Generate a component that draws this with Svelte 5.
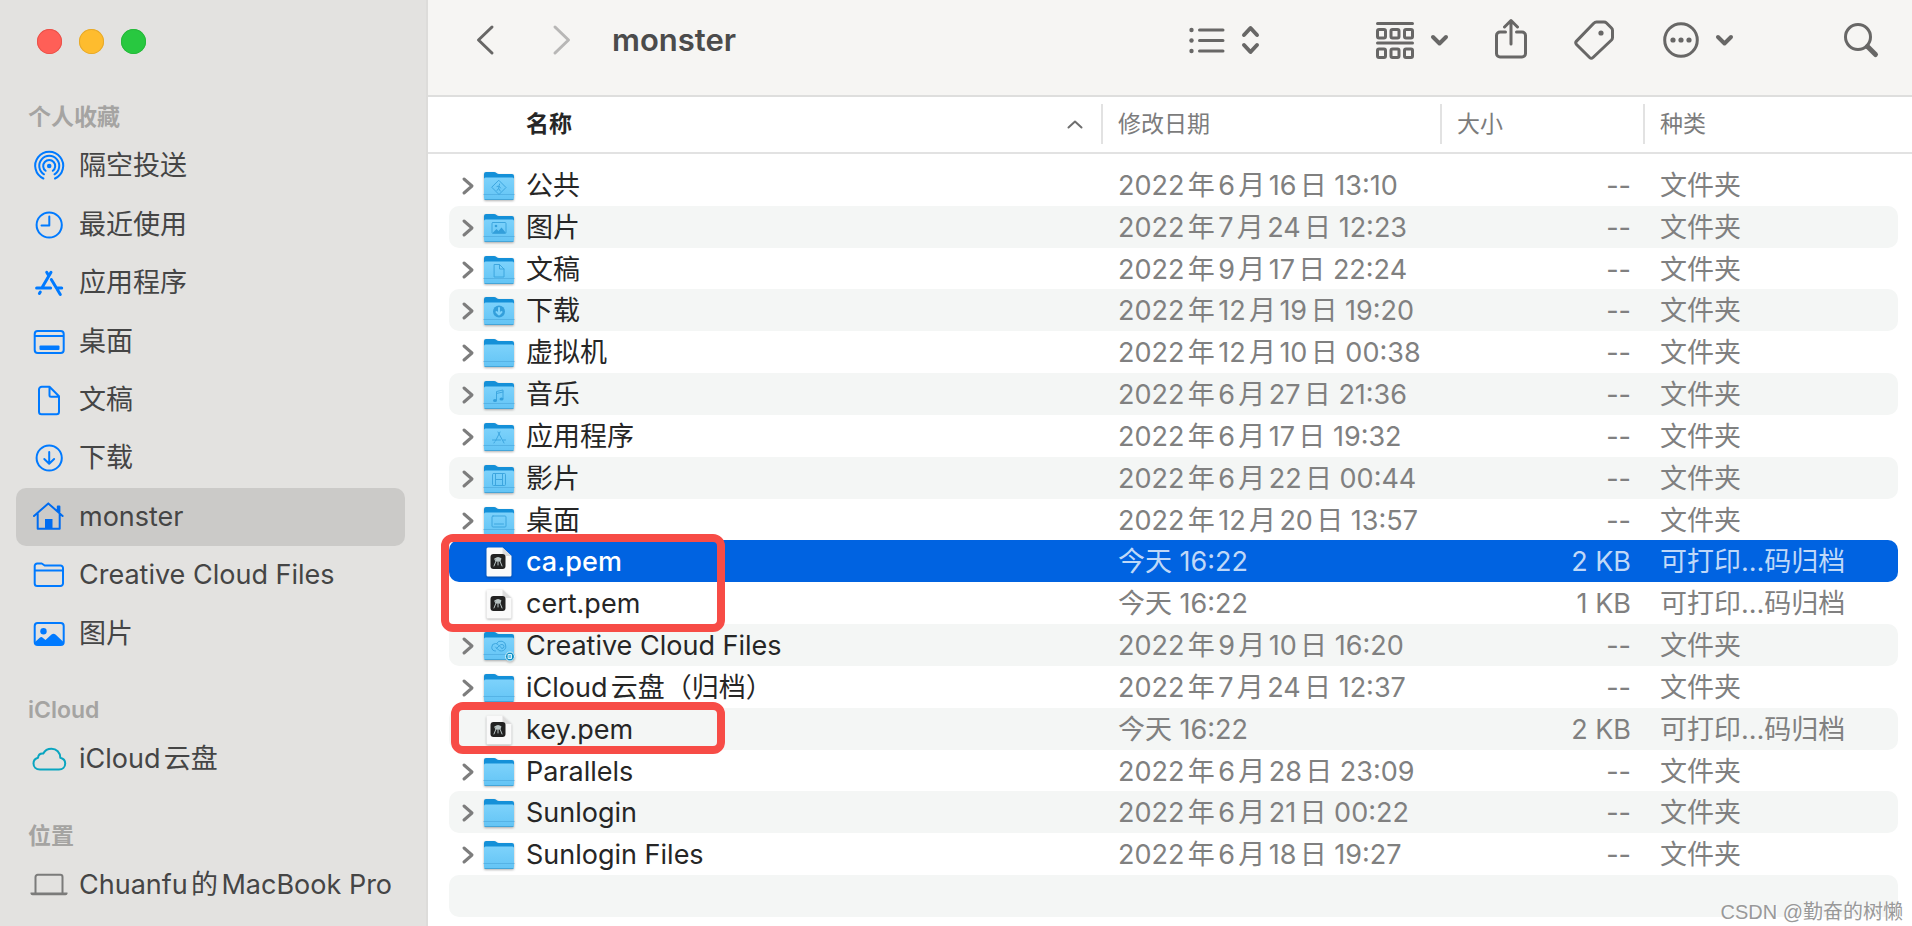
<script lang="ts">
  interface SidebarItem {
    icon: string;
    label: string;
  }

  interface SidebarSection {
    title: string;
    items: SidebarItem[];
  }

  interface FileRow {
    name: string;
    date: string;
    kind: 'folder' | 'pem';
    glyph?: string;
    size?: string;
    mark?: 'pair' | 'single';
  }

  const sections: SidebarSection[] = [
    {
      title: '个人收藏',
      items: [
        { icon: 'airdrop', label: '隔空投送' },
        { icon: 'clock', label: '最近使用' },
        { icon: 'apps', label: '应用程序' },
        { icon: 'desktop', label: '桌面' },
        { icon: 'doc', label: '文稿' },
        { icon: 'download', label: '下载' },
        { icon: 'home', label: 'monster' },
        { icon: 'folder', label: 'Creative Cloud Files' },
        { icon: 'picture', label: '图片' },
      ],
    },
    { title: 'iCloud', items: [{ icon: 'cloud', label: 'iCloud云盘' }] },
    { title: '位置', items: [{ icon: 'laptop', label: 'Chuanfu的MacBook Pro' }] },
  ];

  const files: FileRow[] = [
    { name: '公共', date: '2022年6月16日 13:10', kind: 'folder', glyph: 'public' },
    { name: '图片', date: '2022年7月24日 12:23', kind: 'folder', glyph: 'picture' },
    { name: '文稿', date: '2022年9月17日 22:24', kind: 'folder', glyph: 'doc' },
    { name: '下载', date: '2022年12月19日 19:20', kind: 'folder', glyph: 'download' },
    { name: '虚拟机', date: '2022年12月10日 00:38', kind: 'folder' },
    { name: '音乐', date: '2022年6月27日 21:36', kind: 'folder', glyph: 'music' },
    { name: '应用程序', date: '2022年6月17日 19:32', kind: 'folder', glyph: 'apps' },
    { name: '影片', date: '2022年6月22日 00:44', kind: 'folder', glyph: 'movie' },
    { name: '桌面', date: '2022年12月20日 13:57', kind: 'folder', glyph: 'desktop' },
    { name: 'ca.pem', date: '今天 16:22', kind: 'pem', size: '2 KB', mark: 'pair' },
    { name: 'cert.pem', date: '今天 16:22', kind: 'pem', size: '1 KB' },
    { name: 'Creative Cloud Files', date: '2022年9月10日 16:20', kind: 'folder', glyph: 'cc' },
    { name: 'iCloud云盘（归档）', date: '2022年7月24日 12:37', kind: 'folder' },
    { name: 'key.pem', date: '今天 16:22', kind: 'pem', size: '2 KB', mark: 'single' },
    { name: 'Parallels', date: '2022年6月28日 23:09', kind: 'folder' },
    { name: 'Sunlogin', date: '2022年6月21日 00:22', kind: 'folder' },
    { name: 'Sunlogin Files', date: '2022年6月18日 19:27', kind: 'folder' },
  ];

  let place = $state('monster');
  let selected = $state('ca.pem');
</script>

{#snippet sidebarIcon(icon: string)}
  <svg class="side-icon {icon}" viewBox="0 0 34 34" aria-hidden="true">
    {#if icon === 'airdrop'}
      <path d="M11.4 29.5A14 14 0 1 1 23 29.5M12 25.3A10 10 0 1 1 22.5 25.3M13.6 21.8A6 6 0 1 1 20.8 21.8" />
      <circle class="solid" cx="17.2" cy="17" r="2.3" />
    {:else if icon === 'clock'}
      <circle cx="17.2" cy="17" r="12.6" />
      <path d="M17.3 8.5v9H9.5" />
    {:else if icon === 'apps'}
      <path
        class="thick"
        d="M19 6.3L10.4 21M14.7 6.3l1.8 3M19.3 13.5l9 15M4.6 22h14M24.5 22h5.2M7.4 27.5l.9-1.5"
      />
    {:else if icon === 'desktop'}
      <rect x="2.7" y="6" width="29" height="22" rx="3" />
      <path d="M3 11h28" />
      <rect class="solid" x="7.5" y="20.5" width="20" height="4.5" rx="1" />
    {:else if icon === 'doc'}
      <path d="M10 3.7h7.5l9.5 9.5v15.5a2.5 2.5 0 0 1-2.5 2.5h-15A2.5 2.5 0 0 1 7 28.7V6.5a2.8 2.8 0 0 1 3-2.8zM17.5 4v8.2a1.5 1.5 0 0 0 1.5 1.5h8" />
    {:else if icon === 'download'}
      <circle cx="17.2" cy="17" r="12.6" />
      <path d="M17.2 11v11.5M12.3 18l4.9 4.7 4.9-4.7" />
    {:else if icon === 'home'}
      <path d="M2 16L16.3 3.4 30.6 16M5.7 13.5v15.2h22V13.5M25.8 10.5v-4h1.6V12" />
      <path class="solid" d="M13 19h7.5v10H13z" />
    {:else if icon === 'folder'}
      <path d="M2.7 25.5V8a2.5 2.5 0 0 1 2.5-2.5h4.5l3 2h15.8A2.500 2.500 0 0 1 31 10v15.500a2.500 2.500 0 0 1-2.500 2.500H5.200a2.500 2.500 0 0 1-2.500-2.500zM3 12.500h28" />
    {:else if icon === 'picture'}
      <rect x="2.7" y="6" width="29" height="22" rx="3" />
      <circle class="solid" cx="11.5" cy="14.3" r="3.2" />
      <path class="solid" d="M3 25l5-4.5q1.500-1 3 .5l2.500 2 6-5.500q2-1.500 4 0l8 7.500v1.500q0 1.500-2 1.500H5q-2 0-2-1.500z" />
    {:else if icon === 'cloud'}
      <path d="M8 27.5c-4 0-6.500-2.700-6.500-6 0-2.700 1.700-5 4.500-5.700.3-3 2.300-4.600 5.300-4.300 1.700-3.500 4.700-4.800 8.200-4.800 5 0 8.700 3.800 8.800 9 3.200.7 4.900 3 4.900 5.700 0 3.500-2.600 6.100-6.200 6.100z" />
    {:else if icon === 'laptop'}
      <path d="M3.5 25V9a2.200 2.200 0 0 1 2.200-2.200h22.600A2.200 2.200 0 0 1 30.500 9v16" />
      <path class="solid" d="M-1.500 24.500h37v.8a2 2 0 0 1-2 2h-33a2 2 0 0 1-2-2z" />
    {/if}
  </svg>
{/snippet}

{#snippet folderIcon(glyph?: string)}
  <svg class="file-icon" viewBox="0 0 30 30" aria-hidden="true">
    <path class="back" d="M0 3a2 2 0 0 1 2-2h8q1.500 0 2.500 1t2.500 1h13a2 2 0 0 1 2 2v6H0z" />
    <path fill="url(#folder-front)" d="M0 8q0-1.500 1.500-1.500h27Q30 6.500 30 8v19a2 2 0 0 1-2 2H2a2 2 0 0 1-2-2z" />
    <path class="crease" d="M0 23.500h30" />
    <path class="edge" d="M1 28.500h28" />
    <g class="glyph">
      {#if glyph === 'public'}
        <path d="M15 9.500l7 7-7 7-7-7z" />
        <path d="M15.500 13v1M13 15.500l2-.5 1.500 2M15 15l-.3 2.500 1.500 2.500M14.500 17.500l-1.500 2" />
      {:else if glyph === 'picture'}
        <rect x="8" y="9.500" width="14" height="11" rx="1" />
        <path class="fill" d="M8.500 20l4-4 2 2 3-3.500 4.500 5.500z" />
        <circle class="fill" cx="12" cy="13" r="1.300" />
      {:else if glyph === 'doc'}
        <path d="M10.500 9.500h5l4.500 4.500v8h-9.500zM15.500 9.500V14H20" />
      {:else if glyph === 'download'}
        <circle class="fill" cx="15" cy="15.500" r="6" />
        <path class="light" d="M15 12v6.500M12.500 16l2.500 2.500 2.500-2.500" />
      {:else if glyph === 'music'}
        <path d="M12.500 20v-8.500l6.500-1.500v8.500M12.500 13.500l6.500-1.500" />
        <ellipse class="fill" cx="11" cy="20.500" rx="2" ry="1.500" />
        <ellipse class="fill" cx="17.500" cy="19" rx="2" ry="1.500" />
      {:else if glyph === 'apps'}
        <path d="M16 10l-4.500 9M14 10l6 11M8.500 18h8M19.500 18h2M10 21l.5-1" />
      {:else if glyph === 'movie'}
        <rect x="8.500" y="9.500" width="13" height="12" rx="1" />
        <path d="M11.500 9.500v12M18.500 9.500v12M11.500 15.500h7" />
      {:else if glyph === 'desktop'}
        <rect x="8" y="10" width="14" height="11" rx="1" />
        <path d="M10.500 18h9" />
      {:else if glyph === 'cc'}
        <path d="M11.500 20a3.700 3.700 0 0 1 0-7.500q1.500 0 2.500 1l4 4M12.500 12.500a5 5 0 0 1 9.300 2.500 4.500 4.500 0 0 1-4.300 5q-2 0-3-1l-3-3M18 17.500a2 2 0 0 0 0-4q-1.500 0-2.500 1l-3 3" />
        <circle class="badge" cx="26" cy="25.500" r="4.500" />
        <path class="badge-bar" d="M24.500 23.500h3v4h-3z" />
      {/if}
    </g>
  </svg>
{/snippet}

{#snippet pemIcon()}
  <svg class="file-icon" viewBox="0 0 30 30" aria-hidden="true">
    <path class="page" d="M4 .5h14.500L27.500 9v19a1.500 1.500 0 0 1-1.500 1.500H4A1.500 1.500 0 0 1 2.500 28V2A1.500 1.500 0 0 1 4 .5z" />
    <path class="fold" d="M18.500.5v7A1.500 1.500 0 0 0 20 9h7.500z" />
    <rect class="tile" x="6.500" y="7" width="15" height="15" rx="3" />
    <path class="keys" d="M11 11.500q3-2 6 0l-1 2.500h-4zM12 14l-2 5M14 14v4M16 14l2 5" />
  </svg>
{/snippet}

{#snippet chevronDown()}
  <svg class="tool-icon" width="17" height="11" viewBox="0 0 17 11" aria-hidden="true">
    <path class="bold" d="M2 2l6.500 6.500L15 2" />
  </svg>
{/snippet}

<svg class="defs" width="0" height="0" aria-hidden="true">
  <defs>
    <linearGradient id="folder-front" x1="0" y1="0" x2="0" y2="1">
      <stop offset="0" stop-color="#7dd2fb" />
      <stop offset="1" stop-color="#63c4f5" />
    </linearGradient>
  </defs>
</svg>

<div class="window">
  <aside class="sidebar">
    <div class="lights">
      <button class="light-btn close" aria-label="关闭"></button>
      <button class="light-btn minimize" aria-label="最小化"></button>
      <button class="light-btn zoom" aria-label="缩放"></button>
    </div>
    <nav class="places">
      {#each sections as section}
        <h2>{section.title}</h2>
        {#each section.items as item}
          <a href="#{item.icon}" class:active={item.label === place} onclick={() => (place = item.label)}>
            {@render sidebarIcon(item.icon)}
            <span>{item.label}</span>
          </a>
        {/each}
      {/each}
    </nav>
  </aside>

  <main class="content">
    <header class="toolbar">
      <div class="history">
        <button aria-label="后退">
          <svg class="tool-icon" width="18" height="30" viewBox="0 0 18 30" aria-hidden="true">
            <path d="M16 2L2.500 15 16 28" />
          </svg>
        </button>
        <button aria-label="前进" disabled>
          <svg class="tool-icon" width="18" height="30" viewBox="0 0 18 30" aria-hidden="true">
            <path d="M2 2l13.500 13L2 28" />
          </svg>
        </button>
      </div>
      <h1>monster</h1>
      <div class="tools">
        <button class="view" aria-label="显示方式">
          <svg class="tool-icon" width="36" height="28" viewBox="0 0 36 28" aria-hidden="true">
            <path d="M10.500 4H34M10.500 14.500H34M10.500 25H34" />
            <circle class="dot" cx="2.500" cy="4" r="2.200" />
            <circle class="dot" cx="2.500" cy="14.500" r="2.200" />
            <circle class="dot" cx="2.500" cy="25" r="2.200" />
          </svg>
          <svg class="tool-icon" width="17" height="28" viewBox="0 0 17 28" aria-hidden="true">
            <path class="bold" d="M2 9l6.500-7L15 9M2 19l6.500 7 6.500-7" />
          </svg>
        </button>
        <button class="group" aria-label="分组">
          <svg class="tool-icon" width="38" height="38" viewBox="0 0 38 38" aria-hidden="true">
            <path d="M1.500 2.500h35M1.500 22h35" />
            <rect x="1.500" y="8.500" width="8" height="8.500" rx="1.500" />
            <rect x="15" y="8.500" width="8" height="8.500" rx="1.500" />
            <rect x="28.500" y="8.500" width="8" height="8.500" rx="1.500" />
            <rect x="1.500" y="28" width="8" height="8.500" rx="1.500" />
            <rect x="15" y="28" width="8" height="8.500" rx="1.500" />
            <rect x="28.500" y="28" width="8" height="8.500" rx="1.500" />
          </svg>
          {@render chevronDown()}
        </button>
        <button aria-label="共享">
          <svg class="tool-icon" width="32" height="42" viewBox="0 0 32 42" aria-hidden="true">
            <path d="M10.500 13H5a3.500 3.500 0 0 0-3.500 3.500v18A3.500 3.500 0 0 0 5 38h22a3.500 3.500 0 0 0 3.500-3.500v-18A3.500 3.500 0 0 0 27 13h-5.500M16 25V2M9.500 8L16 1.500 22.500 8" />
          </svg>
        </button>
        <button aria-label="标签">
          <svg class="tool-icon" width="40" height="40" viewBox="0 0 40 40" aria-hidden="true">
            <path d="M19.500 3.500Q21 2 22.500 2H30q1.500 0 2.500 1l5 5q1 1 1 2.500v7q0 1.500-1 2.500L19 37.500q-1.700 1.500-3.400 0L2.500 24.500q-1.500-1.700 0-3.400z" />
            <circle class="dot" cx="27" cy="13" r="2.600" />
          </svg>
        </button>
        <button class="more" aria-label="更多">
          <svg class="tool-icon" width="36" height="36" viewBox="0 0 36 36" aria-hidden="true">
            <circle cx="18" cy="18" r="16.300" />
            <circle class="dot" cx="10" cy="18" r="2.600" />
            <circle class="dot" cx="18" cy="18" r="2.600" />
            <circle class="dot" cx="26" cy="18" r="2.600" />
          </svg>
          {@render chevronDown()}
        </button>
        <button class="search" aria-label="搜索">
          <svg class="tool-icon" width="34" height="36" viewBox="0 0 34 36" aria-hidden="true">
            <circle cx="14" cy="15" r="12.500" />
            <path class="handle" d="M23.500 24.500l8 8" />
          </svg>
        </button>
      </div>
    </header>

    <table>
      <thead>
        <tr>
          <th class="sorted" scope="col" aria-sort="ascending">
            <span>名称</span>
            <svg width="16" height="9" viewBox="0 0 16 9" aria-hidden="true">
              <path d="M1.500 7.500L8 1.500l6.500 6" />
            </svg>
          </th>
          <th scope="col">修改日期</th>
          <th scope="col">大小</th>
          <th scope="col">种类</th>
        </tr>
      </thead>
      <tbody>
        {#each files as file}
          <tr class:selected={file.name === selected} onclick={() => (selected = file.name)}>
            <td class="name">
              {#if file.kind === 'folder'}
                <button class="expand" aria-label="展开 {file.name}">
                  <svg width="12" height="18" viewBox="0 0 12 18" aria-hidden="true">
                    <path d="M2 2l8 7-8 7" />
                  </svg>
                </button>
                {@render folderIcon(file.glyph)}
              {:else}
                <span class="expand"></span>
                {@render pemIcon()}
              {/if}
              <span>{file.name}</span>
              {#if file.mark}
                <i class="mark {file.mark}"></i>
              {/if}
            </td>
            <td>{file.date}</td>
            <td class="size">{file.size ?? '--'}</td>
            <td>{file.kind === 'folder' ? '文件夹' : '可打印…码归档'}</td>
          </tr>
        {/each}
        <tr class="empty"><td></td></tr>
      </tbody>
    </table>
  </main>

  <div class="watermark">CSDN @勤奋的树懒</div>
</div>

<style>
  :global(body) {
    margin: 0;
  }

  .window {
    position: relative;
    display: flex;
    min-height: 100vh;
    background: #fff;
    font-family: Inter, 'Noto Sans CJK SC', sans-serif;
    font-size: 27px;
    line-height: 36px;
    color: #262626;
    text-autospace: normal;
  }

  .defs {
    position: absolute;
  }

  button {
    display: flex;
    align-items: center;
    padding: 0;
    border: 0;
    background: none;
    color: inherit;
  }

  svg {
    display: block;
    flex: none;
    overflow: visible;
    fill: none;
    stroke: currentColor;
    stroke-linecap: round;
    stroke-linejoin: round;
  }

  /* sidebar */
  .sidebar {
    display: flex;
    flex: none;
    flex-direction: column;
    box-sizing: border-box;
    width: 428px;
    padding: 29px 21px 12px 16px;
    border-right: 2px solid #dddcda;
    background: #e3e2e0;
    color: #454545;
  }

  .lights {
    display: flex;
    gap: 17px;
    padding: 0 21px 16px;
  }

  .light-btn {
    width: 25px;
    height: 25px;
    border-radius: 50%;
  }

  .close {
    background: #ff5f57;
    box-shadow: inset 0 0 0 1px #e9524a;
  }

  .minimize {
    background: #febc2e;
    box-shadow: inset 0 0 0 1px #e5a92c;
  }

  .zoom {
    background: #28c840;
    box-shadow: inset 0 0 0 1px #27b83b;
  }

  .places {
    display: flex;
    flex: 1;
    flex-direction: column;
  }

  .places h2 {
    margin: 28px 0 0;
    padding-left: 12px;
    font-size: 23px;
    font-weight: 600;
    line-height: 39px;
    color: #a5a4a2;
  }

  .places a {
    display: flex;
    flex: 1 0 48px;
    align-items: center;
    gap: 13px;
    padding-left: 16px;
    border-radius: 10px;
    color: inherit;
    text-decoration: none;
    white-space: nowrap;
  }

  .places a.active {
    background: #cbcac8;
  }

  .side-icon {
    width: 34px;
    height: 34px;
    color: #007aff;
    stroke-width: 2;
  }

  .side-icon.home {
    color: #006cf0;
  }

  .side-icon.cloud {
    color: #0aa5c0;
  }

  .side-icon.laptop {
    color: #7b7b7a;
  }

  .side-icon .solid {
    fill: currentColor;
    stroke: none;
  }

  .side-icon .thick {
    stroke-width: 3;
  }

  /* toolbar */
  .content {
    display: flex;
    flex: 1;
    flex-direction: column;
    min-width: 0;
  }

  .toolbar {
    display: flex;
    align-items: center;
    padding: 10px 34px 25px 48px;
    border-bottom: 2px solid #dededd;
    background: #f6f5f3;
    color: #686766;
  }

  .history {
    display: flex;
    gap: 59px;
  }

  .history button:disabled {
    color: #b8b7b6;
  }

  h1 {
    margin: 0 0 0 41px;
    font-size: 31px;
    font-weight: 600;
    line-height: 60px;
    color: #4b4b4b;
  }

  .tools {
    display: flex;
    align-items: center;
    gap: 47px;
    margin-left: auto;
  }

  .tools button {
    gap: 17px;
  }

  .tools .view {
    margin-right: 70px;
  }

  .tools .more {
    margin-left: 2px;
  }

  .tools .search {
    margin-left: 64px;
  }

  .tool-icon {
    stroke-width: 3;
  }

  .tool-icon .bold {
    stroke-width: 4;
  }

  .tool-icon .handle {
    stroke-width: 5;
  }

  .tool-icon .dot {
    fill: currentColor;
    stroke: none;
  }

  /* file list */
  table {
    display: flex;
    flex: 1;
    flex-direction: column;
  }

  thead {
    display: block;
    padding: 7px 0 8px;
    border-bottom: 2px solid #e2e2e2;
  }

  tr {
    display: grid;
    grid-template-columns: minmax(0, 1fr) 339px 203px 269px;
  }

  th {
    padding: 0 0 0 15px;
    border-left: 2px solid #e2e2e2;
    font-size: 23px;
    font-weight: 400;
    line-height: 40px;
    text-align: left;
    color: #7c7c7c;
  }

  th.sorted {
    display: flex;
    align-items: center;
    justify-content: space-between;
    padding: 0 18px 0 98px;
    border-left: 0;
    font-weight: 600;
    color: #262626;
  }

  th svg {
    color: #6e6e6e;
    stroke-width: 2;
  }

  tbody {
    display: flex;
    flex: 1;
    flex-direction: column;
    padding: 10px 14px 9px 21px;
  }

  tbody tr {
    position: relative;
    flex: 1 0 36px;
    grid-template-columns: minmax(0, 1fr) 339px 203px 255px;
    align-items: center;
    border-radius: 10px;
  }

  tbody tr:nth-child(even) {
    background: #f4f6f5;
  }

  tbody tr.selected {
    background: #0063e1;
    color: #fff;
  }

  td {
    padding: 2px 0 0 17px;
    color: #808080;
    white-space: nowrap;
  }

  .selected td {
    color: #bfd8f8;
  }

  td.name {
    display: flex;
    align-items: center;
    padding-left: 13px;
    color: #262626;
  }

  .selected td.name {
    color: #fff;
  }

  .selected td.name span {
    font-weight: 500;
  }

  td.size {
    padding-right: 12px;
    text-align: right;
  }

  .expand {
    flex: none;
    width: 12px;
    color: #7d7d7d;
    stroke-width: 3;
  }

  .file-icon {
    width: 30px;
    height: 30px;
    margin: 0 12px 0 10px;
    stroke: none;
    filter: drop-shadow(0 1px 1px rgba(0, 0, 0, 0.3));
  }

  .back {
    fill: #1490d8;
  }

  .crease {
    stroke: #55b3e6;
    stroke-width: 1;
  }

  .edge {
    stroke: #45a5d8;
    stroke-width: 1;
  }

  .glyph {
    stroke: #3da6df;
    stroke-width: 1;
  }

  .glyph .fill {
    fill: #339fdb;
    stroke: none;
  }

  .glyph .light {
    stroke: #7dd2fb;
    stroke-width: 2;
  }

  .glyph .badge {
    fill: #0c8fc4;
    stroke: #d8f1fb;
  }

  .glyph .badge-bar {
    fill: #6cc6ea;
    stroke: #d8f1fb;
  }

  .page {
    fill: #fafafa;
  }

  .fold {
    fill: #dcdcdc;
  }

  .tile {
    fill: #222;
  }

  .keys {
    fill: #b9c4c4;
    stroke: #b9c4c4;
    stroke-width: 1;
  }

  /* red highlight frames around the certificate files */
  .mark {
    position: absolute;
    z-index: 1;
    top: -6px;
    box-sizing: border-box;
    border: 8px solid #f74c46;
    border-radius: 12px;
    pointer-events: none;
  }

  .mark.pair {
    left: -8px;
    width: 284px;
    height: calc(200% + 14px);
  }

  .mark.single {
    left: 2px;
    width: 274px;
    height: calc(100% + 10px);
  }

  .watermark {
    position: absolute;
    right: 9px;
    bottom: 0;
    font-family: 'Liberation Sans', 'Noto Sans CJK SC', sans-serif;
    font-size: 20px;
    line-height: 28px;
    color: #999;
    text-shadow: 1px 1px 0 #fff;
  }
</style>
